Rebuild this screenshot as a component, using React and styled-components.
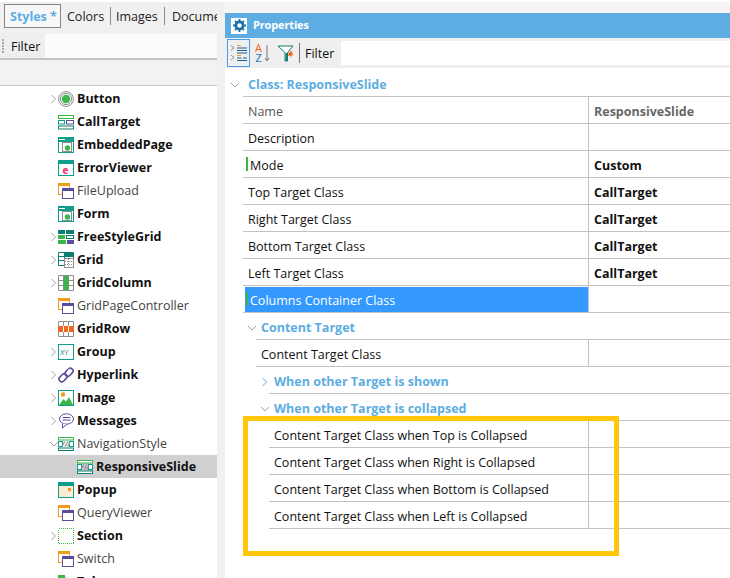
import styled, { createGlobalStyle } from "styled-components";

const TEAL = "#0f9e8c";
const DARK_TEAL = "#0d7f70";
const GREEN = "#3cb54a";
const ORANGE = "#f39a1e";
const PURPLE = "#5a4d9e";
const GRAY = "#8f8f8f";
const ACCENT = "#5dade2";

const GlobalStyle = createGlobalStyle`
  html, body {
    margin: 0;
    padding: 0;
    background: #f0f0f0;
  }
  * {
    box-sizing: border-box;
  }
`;

const Page = styled.div`
  display: flex;
  width: 730px;
  height: 578px;
  overflow: hidden;
  border-top: 2px solid #fff;
  background: #f0f0f0;
  font-family: "Open Sans", "Noto Sans", sans-serif;
  font-size: 12.5px;
  color: #111;
`;

const LeftPanel = styled.div`
  display: flex;
  flex-direction: column;
  width: 217px;
  flex: none;
  padding-top: 2px;
  overflow: hidden;
`;

const Tabs = styled.div`
  display: flex;
  align-items: center;
  height: 24px;
  padding-left: 4px;
  white-space: nowrap;
  flex: none;
`;

const Tab = styled.div`
  flex: none;
  width: ${(p) => (p.$w ? `${p.$w}px` : "auto")};
  height: 18px;
  line-height: 19px;
  padding-left: ${(p) => p.$pad}px;
  border-right: ${(p) => (p.$sep ? "1px solid #8a8a8a" : "none")};
  color: #222;
`;

const ActiveTab = styled.div`
  flex: none;
  width: 57px;
  height: 24px;
  line-height: 23px;
  padding-left: 5px;
  border: 1px solid #858585;
  background: #f7f7f7;
  color: ${ACCENT};
  font-weight: 700;
`;

const FilterBar = styled.div`
  display: flex;
  height: 26px;
  margin-top: 6px;
  background: #fbfbfb;
  border-bottom: 2px solid #c4c4c4;
  flex: none;
`;

const FilterLabel = styled.div`
  display: flex;
  align-items: center;
  gap: 7px;
  width: 45px;
  padding-left: 2px;
  background: #eeeeee;
`;

const Grip = styled.span`
  width: 2px;
  height: 14px;
  background: repeating-linear-gradient(#a8a8a8 0 2px, transparent 2px 3px);
`;

const SearchBand = styled.div`
  height: 26px;
  background: #f2f2f2;
  border-bottom: 1px solid #c8c8c8;
  flex: none;
`;

const Tree = styled.div`
  flex: 1;
  padding-top: 1px;
  background: #fff;
`;

const TreeRow = styled.div`
  display: flex;
  align-items: center;
  height: 23px;
  padding-left: ${(p) => (p.$child ? 77 : 50)}px;
  background: ${(p) => (p.$selected ? "#d0d0d0" : "transparent")};
`;

const Caret = styled.svg`
  width: 8px;
  height: 10px;
  flex: none;
`;

const CaretSlot = styled.span`
  display: flex;
  width: 8px;
  flex: none;
`;

const TreeIcon = styled.svg`
  width: 16px;
  height: 16px;
  margin-right: 3px;
  flex: none;
`;

const TreeLabel = styled.span`
  font-weight: ${(p) => (p.$bold ? 700 : 400)};
  color: ${(p) => (p.$bold ? "#111" : "#444")};
  white-space: nowrap;
`;

const Gutter = styled.div`
  width: 8px;
  flex: none;
`;

const RightPanel = styled.div`
  display: flex;
  flex-direction: column;
  flex: 1;
  padding-top: 11px;
  background: #f5f5f5;
  min-width: 0;
`;

const TitleBar = styled.div`
  display: flex;
  align-items: center;
  gap: 6px;
  height: 25px;
  padding-left: 6px;
  background: ${ACCENT};
  color: #fff;
  font-weight: 700;
  font-size: 11px;
  letter-spacing: -0.15px;
  flex: none;
`;

const TitleText = styled.span`
  margin-top: -2px;
`;

const GearBox = styled.span`
  display: flex;
  align-items: center;
  justify-content: center;
  width: 16px;
  height: 16px;
  background: #fff;
`;

const Toolbar = styled.div`
  display: flex;
  align-items: center;
  height: 30px;
  padding: 1px 0 1px 2px;
  background: #efefef;
  flex: none;
`;

const ToolButton = styled.span`
  display: flex;
  align-items: center;
  justify-content: center;
  width: ${(p) => p.$w}px;
  height: 28px;
  border: ${(p) => (p.$active ? "1px solid #4a9bea" : "none")};
`;

const ToolSep = styled.span`
  width: 1px;
  height: 20px;
  margin: 0 5px 0 1px;
  background: #777;
`;

const ToolLabel = styled.span`
  width: 36px;
`;

const FilterInput = styled.div`
  flex: 1;
  height: 24px;
  background: #fff;
`;

const Sheet = styled.div`
  flex: 1;
  padding-top: 2px;
  background: #fff;
`;

const Row = styled.div`
  display: flex;
  height: 27px;
  padding-left: ${(p) => 18 + p.$level * 13}px;
`;

const RowCaret = styled.span`
  display: flex;
  align-items: center;
  width: 8px;
  flex: none;
  margin-left: ${(p) => (p.$level === 0 ? -12 : -8)}px;
  margin-right: ${(p) => (p.$level === 0 ? 4 : 0)}px;
  padding-top: 2px;
`;

const RowBody = styled.div`
  display: flex;
  flex: 1;
  border-bottom: 1px solid #c2c2c2;
  min-width: 0;
`;

const RowName = styled.div`
  position: relative;
  display: flex;
  align-items: center;
  flex: 1;
  margin-left: ${(p) => (p.$picked ? 2 : 0)}px;
  margin-top: ${(p) => (p.$picked ? 1 : 0)}px;
  padding-top: ${(p) => (p.$picked ? 1 : 2)}px;
  padding-left: ${(p) => (p.$picked ? 5 : p.$changed ? 7 : 5)}px;
  background: ${(p) => (p.$picked ? "#3399ff" : "transparent")};
  color: ${(p) => (p.$picked ? "#fff" : p.$muted ? "#555" : "#111")};
  white-space: nowrap;
  min-width: 0;
`;

const ChangedMark = styled.span`
  position: absolute;
  left: ${(p) => (p.$picked ? 1 : 3)}px;
  top: ${(p) => (p.$picked ? 5 : 6)}px;
  bottom: 6px;
  width: 2px;
  background: ${GREEN};
`;

const GroupName = styled.div`
  display: flex;
  align-items: center;
  flex: 1;
  padding: 2px 0 0 5px;
  color: ${ACCENT};
  font-weight: 700;
  white-space: nowrap;
`;

const RowValue = styled.div`
  display: flex;
  align-items: center;
  width: 142px;
  flex: none;
  padding: 2px 0 0 5px;
  border-left: 1px solid #c2c2c2;
  font-weight: 700;
  color: ${(p) => (p.$muted ? "#666" : "#111")};
  white-space: nowrap;
`;

const Highlighted = styled.div`
  position: relative;
`;

const YellowBox = styled.div`
  position: absolute;
  left: 18px;
  top: -5px;
  width: 376px;
  height: 140px;
  border: 5px solid #ffc60b;
  pointer-events: none;
`;

const icons = {
  target: (
    <>
      <circle cx="8" cy="8" r="7.4" fill="none" stroke={GRAY} />
      <circle cx="8" cy="8" r="5.6" fill="none" stroke={GRAY} />
      <circle cx="8" cy="8" r="4.2" fill={GREEN} />
    </>
  ),
  call: (
    <>
      <rect x="0.5" y="1.5" width="15" height="3" fill="none" stroke={GREEN} />
      <rect x="0.5" y="6.5" width="6" height="3.5" fill="none" stroke={TEAL} />
      <rect x="8.5" y="6.5" width="7" height="3.5" fill="none" stroke={PURPLE} />
      <rect x="0.5" y="12" width="15" height="3" fill="none" stroke={DARK_TEAL} />
    </>
  ),
  embed: (
    <>
      <rect x="0.5" y="0.5" width="15" height="15" fill="#fff" stroke={TEAL} />
      <rect x="0" y="0" width="16" height="5" fill={TEAL} />
      <rect x="1" y="2" width="6" height="1" fill="#fff" />
      <rect x="4.5" y="5.5" width="9" height="9" fill="#fff" stroke={GRAY} />
      <circle cx="9.5" cy="11" r="2.7" fill={GREEN} />
    </>
  ),
  error: (
    <>
      <rect x="0.5" y="0.5" width="15" height="15" fill="#fff" stroke={TEAL} />
      <rect x="0" y="0" width="16" height="4" fill={TEAL} />
      <text x="4.5" y="14" fontSize="10" fontWeight="700" fill="#e8336d" fontFamily="Open Sans">e</text>
    </>
  ),
  control: (
    <>
      <rect x="0.5" y="0.5" width="11" height="11" fill="#fff" stroke={ORANGE} />
      <rect x="0" y="0" width="12" height="3" fill={ORANGE} />
      <rect x="4.5" y="5.5" width="11" height="10" fill="#fff" stroke={PURPLE} />
      <rect x="4" y="5" width="12" height="3" fill={PURPLE} />
    </>
  ),
  freestyle: (
    <>
      <rect x="0" y="1" width="7" height="4" fill={DARK_TEAL} />
      <rect x="8" y="1" width="8" height="4" fill={DARK_TEAL} />
      <rect x="0" y="6" width="7" height="4" fill={GREEN} />
      <rect x="8.5" y="6.5" width="7" height="3" fill="#fff" stroke={DARK_TEAL} />
      <rect x="0" y="11" width="8" height="4" fill={GREEN} />
      <rect x="9" y="11" width="7" height="4" fill={PURPLE} />
    </>
  ),
  grid: (
    <>
      <path d="M0.5 0.5h15v13h-15zM0.5 4.5h15M0.5 8.5h15M6.5 0.5v13" fill="none" stroke={DARK_TEAL} />
      <rect x="7" y="1" width="8" height="3" fill={DARK_TEAL} />
      <rect x="6.5" y="6.5" width="9" height="9" fill="#fff" stroke={GRAY} />
      <path d="M7 9.5h8M7 12.5h8M10.5 7v8" stroke={GRAY} strokeDasharray="1 1" />
    </>
  ),
  column: (
    <>
      <path d="M0.5 0.5h15v15h-15zM0.5 5.5h15M0.5 10.5h15M5.5 0.5v15M10.5 0.5v15" fill="none" stroke={GRAY} />
      <rect x="5.5" y="1" width="5" height="14" fill={GREEN} />
    </>
  ),
  row: (
    <>
      <path d="M0.5 0.5h15v15h-15zM0.5 5.5h15M0.5 10.5h15M5.5 0.5v15M10.5 0.5v15" fill="none" stroke={GRAY} />
      <rect x="0" y="5" width="16" height="6" fill="#f1651e" />
      <path d="M5.5 5v6M10.5 5v6" stroke="#fff" />
    </>
  ),
  group: (
    <>
      <rect x="0.5" y="0.5" width="15" height="15" fill="#fff" stroke={TEAL} />
      <text x="2" y="11" fontSize="7.5" fill={DARK_TEAL} fontFamily="Open Sans">XY</text>
    </>
  ),
  link: (
    <>
      <rect x="0.5" y="8" width="9" height="5.5" rx="2.7" fill="none" stroke={PURPLE} strokeWidth="1.6" transform="rotate(-45 5 10.7)" />
      <rect x="6.5" y="2.5" width="9" height="5.5" rx="2.7" fill="none" stroke={PURPLE} strokeWidth="1.6" transform="rotate(-45 11 5.2)" />
      <path d="M9.5 3.500l2-2" stroke="#bdb8dc" />
    </>
  ),
  image: (
    <>
      <rect x="0.5" y="0.5" width="15" height="15" fill="#fff" stroke={TEAL} />
      <circle cx="5" cy="4.5" r="2.2" fill={ORANGE} />
      <path d="M1 15l4.5-6 2.5 2.500 3-4.500 4 8z" fill={GREEN} />
    </>
  ),
  message: (
    <>
      <ellipse cx="8.5" cy="6" rx="7" ry="5.2" fill="#fff" stroke={PURPLE} />
      <path d="M4.5 10.5V15l4.5-3.800" fill="#fff" stroke={PURPLE} />
      <path d="M4.5 4.5h8M4.5 7h8" stroke={PURPLE} />
    </>
  ),
  nav: (
    <>
      <rect x="0.5" y="1.5" width="15" height="2.5" fill="#fff" stroke={GREEN} />
      <rect x="0.5" y="12" width="15" height="2.5" fill="#fff" stroke={DARK_TEAL} />
      <rect x="0.5" y="5.5" width="4" height="5" fill="#fff" stroke={TEAL} />
      <rect x="11.5" y="5.5" width="4" height="5" fill="#fff" stroke={TEAL} />
      <path d="M4 10l3-4.500M7 10.500l3-5M9.500 10.500l2.500-4" stroke={GRAY} strokeWidth="1.3" />
    </>
  ),
  popup: (
    <>
      <rect x="0.5" y="0.5" width="15" height="15" fill="#fdecd0" stroke={TEAL} />
      <rect x="0" y="0" width="16" height="4" fill={TEAL} />
      <rect x="10" y="6" width="3" height="3" fill={ORANGE} />
    </>
  ),
  section: (
    <rect x="0.5" y="0.5" width="15" height="15" fill="none" stroke={GREEN} strokeDasharray="1 1" shapeRendering="crispEdges" />
  ),
  tab: (
    <>
      <path d="M0.5 15.5V2.5h6l1 2h8v11z" fill="#fff" stroke={GREEN} />
      <rect x="0" y="1" width="7" height="3" fill={GREEN} />
    </>
  ),
};

const treeItems = [
  { label: "Button", icon: "target", bold: true, caret: "right" },
  { label: "CallTarget", icon: "call", bold: true },
  { label: "EmbeddedPage", icon: "embed", bold: true },
  { label: "ErrorViewer", icon: "error", bold: true },
  { label: "FileUpload", icon: "control" },
  { label: "Form", icon: "embed", bold: true },
  { label: "FreeStyleGrid", icon: "freestyle", bold: true, caret: "right" },
  { label: "Grid", icon: "grid", bold: true, caret: "right" },
  { label: "GridColumn", icon: "column", bold: true, caret: "right" },
  { label: "GridPageController", icon: "control" },
  { label: "GridRow", icon: "row", bold: true },
  { label: "Group", icon: "group", bold: true, caret: "right" },
  { label: "Hyperlink", icon: "link", bold: true, caret: "right" },
  { label: "Image", icon: "image", bold: true, caret: "right" },
  { label: "Messages", icon: "message", bold: true, caret: "right" },
  { label: "NavigationStyle", icon: "nav", caret: "down" },
  { label: "ResponsiveSlide", icon: "nav", bold: true, child: true, selected: true },
  { label: "Popup", icon: "popup", bold: true },
  { label: "QueryViewer", icon: "control" },
  { label: "Section", icon: "section", bold: true, caret: "right" },
  { label: "Switch", icon: "control" },
  { label: "Tabs", icon: "tab", bold: true, caret: "right" },
];

const targetRows = ["Top", "Right", "Bottom", "Left"];

const Chevron = ({ dir, color = "#a0a0a0" }) => (
  <Caret viewBox="0 0 8 10">
    <path
      d={dir === "right" ? "M1.5 1l4 4-4 4" : "M0 3l4 4 4-4"}
      fill="none"
      stroke={color}
      strokeWidth="1"
    />
  </Caret>
);

const PropRow = ({ name, value, level = 0, muted, changed, picked }) => (
  <Row $level={level}>
    <RowBody>
      <RowName $muted={muted} $picked={picked} $changed={changed}>
        {changed && <ChangedMark $picked={picked} />}
        {name}
      </RowName>
      <RowValue $muted={muted}>{value}</RowValue>
    </RowBody>
  </Row>
);

const GroupRow = ({ name, level, dir }) => (
  <Row $level={level}>
    <RowCaret $level={level}>
      <Chevron dir={dir} color={dir === "right" ? ACCENT : "#a0a0a0"} />
    </RowCaret>
    <RowBody>
      <GroupName>{name}</GroupName>
    </RowBody>
  </Row>
);

export default function App() {
  return (
    <Page>
      <GlobalStyle />
      <LeftPanel>
        <Tabs>
          <ActiveTab>Styles *</ActiveTab>
          <Tab $w={50} $pad={6} $sep>Colors</Tab>
          <Tab $w={54} $pad={5} $sep>Images</Tab>
          <Tab $pad={7}>Documents</Tab>
        </Tabs>
        <FilterBar>
          <FilterLabel>
            <Grip />
            Filter
          </FilterLabel>
        </FilterBar>
        <SearchBand />
        <Tree>
          {treeItems.map((item) => (
            <TreeRow key={item.label} $child={item.child} $selected={item.selected}>
              {!item.child && <CaretSlot>{item.caret && <Chevron dir={item.caret} />}</CaretSlot>}
              <TreeIcon viewBox="0 0 16 16">{icons[item.icon]}</TreeIcon>
              <TreeLabel $bold={item.bold}>{item.label}</TreeLabel>
            </TreeRow>
          ))}
        </Tree>
      </LeftPanel>
      <Gutter />
      <RightPanel>
        <TitleBar>
          <GearBox>
            <svg width="13" height="13" viewBox="0 0 13 13">
              <circle cx="6.5" cy="6.5" r="3.6" fill="none" stroke="#1c6fa8" strokeWidth="2.6" />
              <path
                d="M6.5 0v2.5M6.5 10.5V13M0 6.5h2.5M10.5 6.5H13M2 2l1.800 1.800M9.200 9.200L11 11M11 2L9.200 3.800M3.800 9.200L2 11"
                stroke="#1c6fa8"
                strokeWidth="1.8"
              />
            </svg>
          </GearBox>
          <TitleText>Properties</TitleText>
        </TitleBar>
        <Toolbar>
          <ToolButton $active $w={23}>
            <svg width="17" height="20" viewBox="0 0 17 20">
              <path d="M1 2.5l3 2.500-3 2.500M1 12l3 2.500L1 17" fill="none" stroke="#888" />
              <path d="M7 2.5h4M7 12.500h4" stroke={ORANGE} />
              <path d="M7 5h10M7 7.500h10M7 10h10M7 15h4.500M13 15h4M7 17.500h10" stroke="#1c5f8f" />
            </svg>
          </ToolButton>
          <ToolButton $w={24}>
            <svg width="15" height="22" viewBox="0 0 15 22">
              <text x="0" y="10" fontSize="11" fontFamily="Open Sans" fill="#f1651e">A</text>
              <text x="0.5" y="20" fontSize="11" fontFamily="Open Sans" fill="#1c6fa8">Z</text>
              <path d="M12 3v15M10 16l2 3 2-3" fill="none" stroke="#777" />
            </svg>
          </ToolButton>
          <ToolButton $w={24}>
            <svg width="18" height="18" viewBox="0 0 18 18">
              <path d="M1 2h15l-5.5 6.500V17H8V8.500z" fill="#fff" stroke={DARK_TEAL} />
              <path d="M8.500 9h2v8h-2z" fill={DARK_TEAL} />
              <path d="M13 6l1 2 2-.5-1 2 1.500 1.500-2 .3-.5 2-1.200-1.800-2 .5 1-1.800-1-1.500 2-.2z" fill="#f1651e" />
            </svg>
          </ToolButton>
          <ToolSep />
          <ToolLabel>Filter</ToolLabel>
          <FilterInput />
        </Toolbar>
        <Sheet>
          <GroupRow name="Class: ResponsiveSlide" level={0} dir="down" />
          <PropRow name="Name" value="ResponsiveSlide" muted />
          <PropRow name="Description" />
          <PropRow name="Mode" value="Custom" changed />
          <PropRow name="Top Target Class" value="CallTarget" />
          <PropRow name="Right Target Class" value="CallTarget" />
          <PropRow name="Bottom Target Class" value="CallTarget" />
          <PropRow name="Left Target Class" value="CallTarget" />
          <PropRow name="Columns Container Class" picked changed />
          <GroupRow name="Content Target" level={1} dir="down" />
          <PropRow name="Content Target Class" level={1} />
          <GroupRow name="When other Target is shown" level={2} dir="right" />
          <GroupRow name="When other Target is collapsed" level={2} dir="down" />
          <Highlighted>
            {targetRows.map((side) => (
              <PropRow key={side} name={`Content Target Class when ${side} is Collapsed`} level={2} />
            ))}
            <YellowBox />
          </Highlighted>
        </Sheet>
      </RightPanel>
    </Page>
  );
}
